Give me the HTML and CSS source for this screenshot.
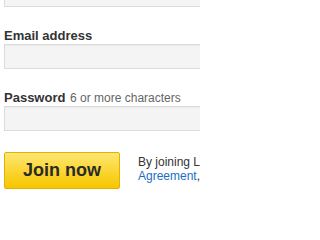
FILE: index.html
```html
<!DOCTYPE html>
<html>
<head>
<meta charset="utf-8">
<link rel="stylesheet" href="styles.css">
</head>
<body>
<div class="page">
<form class="form">
  <input class="field field-top" type="text">
  <label class="label">Email address</label>
  <input class="field" type="text">
  <label class="label">Password <span class="hint">6 or more characters</span></label>
  <input class="field" type="password">
  <div class="actions">
    <button class="join" type="button">Join now</button>
    <p class="terms">By joining LinkedIn, you agree to LinkedIn's User<br><a href="#">Agreement</a>, <a href="#">Privacy Policy</a> and <a href="#">Cookie Policy</a>.</p>
  </div>
</form>
</div>
</body>
</html>
```
FILE: styles.css
```css
html, body {
  margin: 0;
  padding: 0;
  background: #ffffff;
  overflow: hidden;
}
body {
  font-family: "Liberation Sans", Arial, sans-serif;
  color: #333333;
}
.page {
  width: 200px;
  height: 200px;
  overflow: hidden;
}
.form {
  display: flex;
  flex-direction: column;
  padding-left: 4px;
  margin-top: -18px;
}
.field {
  box-sizing: border-box;
  display: block;
  width: 300px;
  height: 25px;
  margin: 0;
  border: 1px solid #dcdcdc;
  background: #f4f4f4;
  box-shadow: inset 0 1px 1px rgba(0,0,0,0.04);
}
.label {
  display: block;
  margin-top: 21px;
  font-size: 13px;
  line-height: 16px;
  font-weight: bold;
  color: #333333;
  white-space: nowrap;
}
.hint {
  font-weight: normal;
  font-size: 12px;
  color: #666666;
  margin-left: 1px;
}
.actions {
  display: flex;
  align-items: flex-start;
  gap: 18px;
  margin-top: 21px;
}
.join {
  box-sizing: border-box;
  flex: none;
  width: 116px;
  height: 37px;
  margin: 0;
  padding: 0;
  border: 1px solid #e3b200;
  border-radius: 2px;
  background: linear-gradient(to bottom, #fde774 0%, #fbd634 50%, #f6c600 100%);
  font-family: "Liberation Sans", Arial, sans-serif;
  font-size: 18px;
  font-weight: bold;
  color: #2a2a2a;
}
.terms {
  margin: 0;
  padding-top: 3px;
  font-size: 12px;
  line-height: 14px;
  color: #333333;
  white-space: nowrap;
}
.terms a {
  color: #1b6fc3;
  text-decoration: none;
}
```
